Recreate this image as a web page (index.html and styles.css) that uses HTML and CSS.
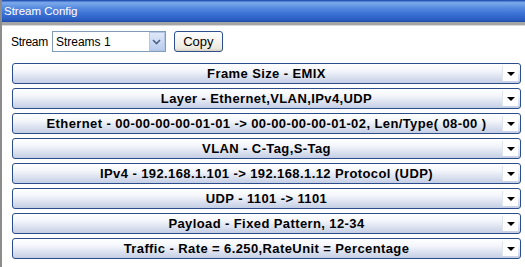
FILE: index.html
```html
<!DOCTYPE html>
<html lang="en">
<head>
    <meta charset="UTF-8">
    <title>Stream Config</title>
    <link rel="stylesheet" href="styles.css">
</head>
<body>
    <div class="window">
        <div class="titlebar">Stream Config</div>
        <div class="content">
            <div class="toolbar">
                <span class="label">Stream</span>
                <div class="select">
                    <span class="select-value">Streams 1</span>
                    <span class="select-btn">
                        <svg width="9" height="6" viewBox="0 0 9 6"><path d="M1 1 L4.5 4.5 L8 1" fill="none" stroke="#4d6185" stroke-width="1.6"/></svg>
                    </span>
                </div>
                <button class="btn">Copy</button>
            </div>

            <div class="sections">
                <div class="section"><span class="section-text">Frame Size - EMIX</span><span class="drop"></span></div>
                <div class="section"><span class="section-text">Layer - Ethernet,VLAN,IPv4,UDP</span><span class="drop"></span></div>
                <div class="section"><span class="section-text">Ethernet - 00-00-00-00-01-01 -&gt; 00-00-00-00-01-02, Len/Type( 08-00 )</span><span class="drop"></span></div>
                <div class="section"><span class="section-text">VLAN - C-Tag,S-Tag</span><span class="drop"></span></div>
                <div class="section"><span class="section-text">IPv4 - 192.168.1.101 -&gt; 192.168.1.12 Protocol (UDP)</span><span class="drop"></span></div>
                <div class="section"><span class="section-text">UDP - 1101 -&gt; 1101</span><span class="drop"></span></div>
                <div class="section"><span class="section-text">Payload - Fixed Pattern, 12-34</span><span class="drop"></span></div>
                <div class="section"><span class="section-text">Traffic - Rate = 6.250,RateUnit = Percentage</span><span class="drop"></span></div>
            </div>
        </div>
    </div>
</body>
</html>
```

FILE: styles.css
```css
body {
    margin: 0;
    padding: 0;
    background: #fff;
    font-family: "Liberation Sans", Arial, sans-serif;
    color: #000;
    overflow: hidden;
}

.window {
    height: 267px;
    border-left: 2px solid #8c8c8c;
    box-sizing: border-box;
}

.titlebar {
    height: 22px;
    box-sizing: border-box;
    padding: 4px 0 0 2px;
    font-size: 11.5px;
    color: #fff;
    background: linear-gradient(to bottom, #3a6fd0 0, #7eaaea 8%, #5a8ee0 30%, #3b72d6 60%, #2a5dc0 90%, #1f4aa8 100%);
    border-top: 1px solid #2a55b0;
}

.content {
    border-top: 3px solid #a5a5a5;
    box-shadow: inset 0 1px 0 #d8d8d8;
}

.toolbar {
    display: flex;
    align-items: center;
    padding: 6px 0 0 9px;
    height: 21px;
}

.label {
    font-size: 12px;
    margin-right: 4px;
    letter-spacing: -0.3px;
}

.select {
    width: 114px;
    height: 21px;
    box-sizing: border-box;
    border: 1px solid #7f9db9;
    display: flex;
    align-items: center;
    justify-content: space-between;
    font-size: 12px;
}

.select-value {
    padding-left: 3px;
}

.select-btn {
    width: 16px;
    height: 19px;
    box-sizing: border-box;
    border: 1px solid #b4c6e6;
    background: linear-gradient(to bottom, #dfe8f8, #b9cbee);
    display: flex;
    align-items: center;
    justify-content: center;
}

.btn {
    margin-left: 8px;
    width: 49px;
    height: 21px;
    border: 1px solid #2d4f8e;
    border-radius: 3px;
    background: linear-gradient(to bottom, #ffffff, #eceae0 85%, #d6d0c0);
    font-family: "Liberation Sans", Arial, sans-serif;
    font-size: 13px;
    padding: 0;
}

.sections {
    display: flex;
    flex-direction: column;
    gap: 4px;
    margin: 11px 4px 0 10px;
}

.section {
    position: relative;
    height: 21px;
    box-sizing: border-box;
    border: 1px solid #2c4d8c;
    border-radius: 3px;
    background: linear-gradient(to bottom, #ffffff 0, #f4f6fb 35%, #c4cee4 100%);
    display: flex;
    align-items: center;
    justify-content: center;
    font-size: 13px;
    font-weight: bold;
    letter-spacing: 0.4px;
}

.drop {
    position: absolute;
    right: 2px;
    top: 2px;
    width: 15px;
    height: 15px;
    background: #fff;
    border-left: 1px solid #dfe4ee;
}

.drop:after {
    content: "";
    position: absolute;
    left: 4px;
    top: 6px;
    border-left: 4px solid transparent;
    border-right: 4px solid transparent;
    border-top: 4px solid #000;
}
```
